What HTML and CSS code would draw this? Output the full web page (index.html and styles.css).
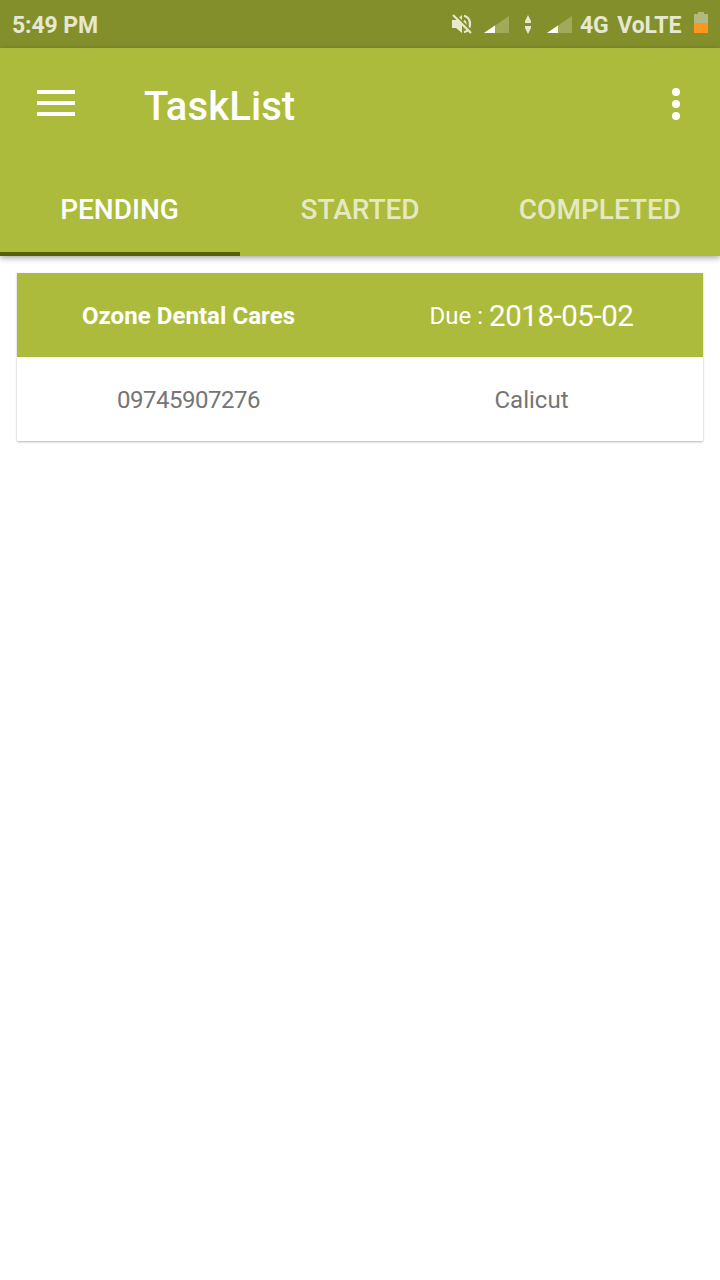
FILE: index.html
```html
<!DOCTYPE html>
<html lang="en">
<head>
<meta charset="utf-8">
<title>TaskList</title>
<link rel="stylesheet" href="styles.css">
</head>
<body>
<div class="status-bar">
  <span class="clock">5:49 PM</span>
  <div class="status-icons">
    <svg class="icon-mute" width="20" height="20" viewBox="0 0 20 20">
      <path class="fill" d="M0 6h4l6-5v18l-6-5H0z"/>
      <path class="wave" d="M12 6.5q3 3.500 0 7M12 1.800c8 2 8 14.400 0 16.400"/>
      <path class="slash-gap" d="M2.500 0l17 17"/>
      <path class="slash" d="M1 1l18 18"/>
    </svg>
    <svg class="icon-signal" width="25" height="17" viewBox="0 0 25 17">
      <path class="signal-off" d="M0 17L25 0v17z"/>
      <path class="signal-on" d="M0 17l11-7.500V17z"/>
    </svg>
    <svg class="icon-data" width="6" height="19" viewBox="0 0 6 19">
      <path class="fill" d="M3 0l3 6v2H0V6zM0 11h6v2l-3 6-3-6z"/>
    </svg>
    <svg class="icon-signal-2" width="25" height="17" viewBox="0 0 25 17">
      <path class="signal-off" d="M0 17L25 0v17z"/>
      <path class="signal-on" d="M0 17l11-7.500V17z"/>
    </svg>
    <span class="network">4G VoLTE</span>
    <svg class="icon-battery" width="14" height="21" viewBox="0 0 14 21">
      <path class="battery-body" d="M4 0h6v2h4v9H0V2h4z"/>
      <path class="battery-level" d="M0 11h14v10H0z"/>
    </svg>
  </div>
</div>
<header class="app-header">
  <div class="toolbar">
    <svg class="icon-menu" width="38" height="26" viewBox="0 0 38 26">
      <path d="M0 0h38v4H0zM0 11h38v4H0zM0 22h38v4H0z"/>
    </svg>
    <h1 class="title">TaskList</h1>
    <svg class="icon-more" width="8" height="32" viewBox="0 0 8 32">
      <circle cx="4" cy="4" r="4"/><circle cx="4" cy="16" r="4"/><circle cx="4" cy="28" r="4"/>
    </svg>
  </div>
  <nav class="tabs">
    <div class="tab tab-active">PENDING</div>
    <div class="tab">STARTED</div>
    <div class="tab">COMPLETED</div>
  </nav>
</header>
<main class="content">
  <article class="card">
    <div class="card-row card-head">
      <div class="cell name">Ozone Dental Cares</div>
      <div class="cell"><span>Due :</span><span class="date">2018-05-02</span></div>
    </div>
    <div class="card-row card-body">
      <div class="cell phone">09745907276</div>
      <div class="cell">Calicut</div>
    </div>
  </article>
</main>
</body>
</html>
```
FILE: styles.css
```css
* {
  box-sizing: border-box;
}

body {
  margin: 0;
  min-height: 1280px;
  background: #fff;
  font-family: Roboto, sans-serif;
}

svg {
  display: block;
  flex: none;
}

.status-bar {
  display: flex;
  justify-content: space-between;
  height: 48px;
  padding: 0 12px;
  background: #838f2b;
  color: #e6e9d0;
  font-size: 23px;
  font-weight: 700;
  line-height: 52px;
}

.clock {
  letter-spacing: -0.1px;
}

.status-icons {
  display: flex;
}

.icon-mute {
  margin: 14px 12px 0 0;
}

.icon-signal {
  margin: 16px 16px 0 0;
}

.icon-data {
  margin: 15px 16px 0 0;
}

.icon-signal-2 {
  margin: 16px 8px 0 0;
}

.network {
  width: 101px;
  margin-right: 13px;
  white-space: nowrap;
  letter-spacing: -0.1px;
  word-spacing: 3px;
}

.icon-battery {
  margin: 12px 1px 0 0;
}

.status-icons {
  margin-right: -1px;
}

.fill {
  fill: #e6e9d0;
}

.wave {
  fill: none;
  stroke: #e6e9d0;
  stroke-width: 2.200;
}

.slash-gap {
  stroke: #838f2b;
  stroke-width: 2;
}

.slash {
  stroke: #e6e9d0;
  stroke-width: 2.200;
}

.signal-off {
  fill: #9faa5b;
}

.signal-on {
  fill: #fff;
}

.battery-body {
  fill: #b0b980;
}

.battery-level {
  fill: #ff961e;
}

.app-header {
  position: relative;
  height: 208px;
  background: #acbb3c;
  color: #fff;
  box-shadow: 0 2px 6px rgba(0, 0, 0, 0.35);
}

.toolbar {
  display: flex;
  align-items: center;
  height: 112px;
  padding: 0 40px 0 37px;
}

.icon-menu {
  margin: 0 69px 2px 0;
  fill: #fff;
}

.title {
  flex: 1;
  margin: 6px 0 0;
  font-size: 40px;
  font-weight: 500;
  letter-spacing: 0.1px;
  line-height: 48px;
}

.icon-more {
  fill: #fff;
}

.tabs {
  display: grid;
  grid-template-columns: repeat(3, 1fr);
  height: 96px;
}

.tab {
  height: 96px;
  padding-top: 3px;
  color: rgba(255, 255, 255, 0.7);
  font-size: 28px;
  font-weight: 500;
  line-height: 94px;
  text-align: center;
}

.tab-active {
  border-bottom: 4px solid #556100;
  padding-right: 1px;
  color: #fff;
}

.content {
  padding: 17px;
}

.card {
  box-shadow: 0 1px 2px rgba(0, 0, 0, 0.3);
  background: #fff;
}

.card-row {
  display: grid;
  grid-template-columns: 1fr 1fr;
  height: 84px;
  font-size: 24px;
  line-height: 86px;
}

.card-head {
  background: #acbb3c;
  color: #fff;
}

.card-body {
  color: #757575;
}

.cell {
  display: flex;
  justify-content: center;
  gap: 6px;
}

.name {
  font-weight: 700;
  letter-spacing: 0.05px;
}

.phone {
  letter-spacing: -0.48px;
}

.date {
  font-size: 29.500px;
  letter-spacing: -0.450px;
}
```
